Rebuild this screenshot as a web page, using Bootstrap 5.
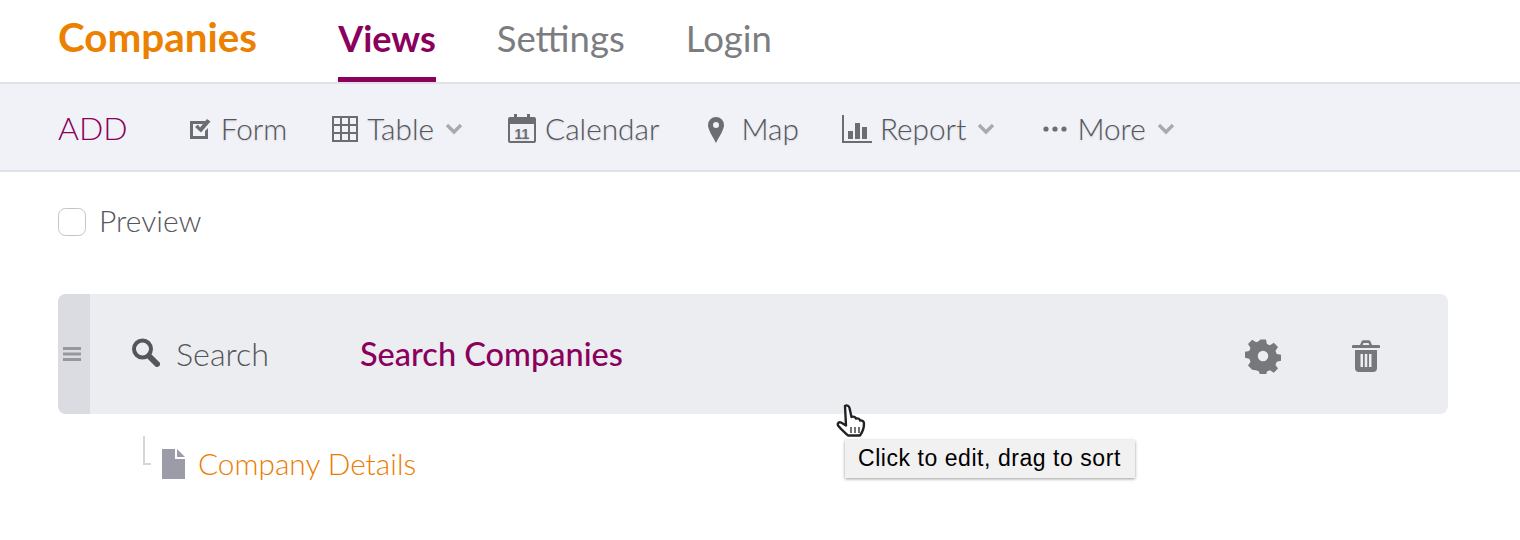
<!DOCTYPE html>
<html lang="en">
<head>
<meta charset="utf-8">
<title>Views</title>
<link href="https://cdn.jsdelivr.net/npm/bootstrap@5.3.0/dist/css/bootstrap.min.css" rel="stylesheet">
<style>
body{font-family:"Lato",sans-serif;font-weight:300;color:#55565c;background:#fff;height:540px;overflow:hidden}
.topnav{height:84px;border-bottom:2px solid #e0e1e6;padding-left:58px;gap:61px}
.brand-link{font-size:40.4px;font-weight:700;color:#ec8000;text-decoration:none;margin-right:20px;line-height:73px}
.top-link{font-size:36.5px;font-weight:400;color:#7c7d80;text-decoration:none;line-height:77px;height:82px;display:block}
.top-link.current{font-size:36px;font-weight:700;color:#8a005c;border-bottom:5px solid #8a005c;line-height:76px}
.subbar{height:88px;background:#f1f2f7;border-bottom:2px solid #e0e1e6;padding:4px 0 0 58px;gap:45px}
.add-link{font-size:32px;color:#8a005c;text-decoration:none;margin-right:15px;margin-top:-3px}
.sub-link{font-size:29.8px;color:#55565c;text-decoration:none;gap:9px;text-shadow:0 1px 2px rgba(0,0,0,.14)}
.sub-ico{fill:#6c6d72;flex:none}
.chev{fill:none;stroke:#a9aaad;stroke-width:3.4;flex:none;margin-left:2px}
.preview-row{padding:30px 0 0 58px;gap:13px;font-size:30px;line-height:36px}
.fake-check{width:28px;height:28px;border:1px solid #c4c5c8;border-radius:6px;margin:4px 0 0;box-shadow:none}
.view-row{margin:56px 72px 0 58px;height:120px;background:#ecedf1;border-radius:8px;overflow:hidden}
.grip{width:32px;background:#dbdce1}
.view-type{font-size:32.3px;margin-left:41px;gap:16px;width:229px}
.view-name{font-size:32.5px;font-weight:500;color:#8a005c}
.action-ico{fill:#77787c}
.tree-row{padding-left:143px;margin-top:22px;height:56px;font-size:29.8px;color:#ec7c00}
.tree-line{width:8px;height:29px;border-left:2px solid #d5d6db;border-bottom:2px solid #d5d6db;margin-right:11px}
.hint-box{position:absolute;left:845px;top:440px;width:290px;height:38px;background:#f1f1f1;box-shadow:0 1px 3px rgba(0,0,0,.4);font:400 23px/36px "Liberation Sans",sans-serif;letter-spacing:.55px;color:#000;padding-left:13px;white-space:nowrap}
.hand{position:absolute;left:834px;top:403px}
</style>
</head>
<body>
<nav class="topnav d-flex align-items-start">
  <a class="brand-link" href="#">Companies</a>
  <a class="top-link current" href="#">Views</a>
  <a class="top-link" href="#">Settings</a>
  <a class="top-link" href="#">Login</a>
</nav>
<div class="subbar d-flex align-items-center">
  <a class="add-link" href="#">ADD</a>
  <a class="sub-link d-flex align-items-center" href="#">
    <svg class="sub-ico" width="24" height="24" viewBox="0 0 24 24"><path fill-rule="evenodd" d="M2 4h16l-3 3H5v12h12v-5l3-3v11H2z"/><path d="M7 10l3-2.500 2 3L19 2l3.500 2.500-9.500 11z"/></svg>Form</a>
  <a class="sub-link d-flex align-items-center" href="#">
    <svg class="sub-ico" width="26" height="26" viewBox="0 0 26 26"><path fill-rule="evenodd" d="M0 0h26v26H0zM2 2v6h6V2zm8 0v6h6V2zm8 0v6h6V2zM2 10v6h6v-6zm8 0v6h6v-6zm8 0v6h6v-6zM2 18v6h6v-6zm8 0v6h6v-6zm8 0v6h6v-6z"/></svg>Table
    <svg class="chev" width="18" height="12" viewBox="0 0 18 12"><path d="M2 2l7 7 7-7"/></svg></a>
  <a class="sub-link d-flex align-items-center" href="#">
    <svg class="sub-ico" width="28" height="30" viewBox="0 0 28 30" style="margin-top:-3px"><path fill-rule="evenodd" d="M2 4h4V1h3v3h10V1h3v3h4a2 2 0 012 2v22a2 2 0 01-2 2H2a2 2 0 01-2-2V6a2 2 0 012-2zm0 7v17h24V11z"/><text x="14" y="26" font-size="14" font-weight="700" text-anchor="middle" font-family="Liberation Sans">11</text></svg>Calendar</a>
  <a class="sub-link d-flex align-items-center" href="#">
    <svg class="sub-ico" width="16" height="26" viewBox="0 0 16 26" style="margin:2px 8px 0 4px"><path fill-rule="evenodd" d="M8 0a8 8 0 018 8c0 5-5 12-8 18C5 20 0 13 0 8a8 8 0 018-8zm0 5a3 3 0 100 6 3 3 0 000-6z"/></svg>Map</a>
  <a class="sub-link d-flex align-items-center" href="#">
    <svg class="sub-ico" width="30" height="28" viewBox="0 0 30 28" style="margin:0 -1px 0 -2px"><path d="M0 0h2v26h28v2H0z"/><path d="M6 16h5v8H6zM13 8h5v16h-5zM20 12h5v12h-5z"/></svg>Report
    <svg class="chev" width="18" height="12" viewBox="0 0 18 12"><path d="M2 2l7 7 7-7"/></svg></a>
  <a class="sub-link d-flex align-items-center" href="#">
    <svg class="sub-ico" width="24" height="6" viewBox="0 0 24 6" style="margin:0 1px 0 3px"><circle cx="3" cy="3" r="2.600"/><circle cx="12" cy="3" r="2.600"/><circle cx="21" cy="3" r="2.600"/></svg>More
    <svg class="chev" width="18" height="12" viewBox="0 0 18 12"><path d="M2 2l7 7 7-7"/></svg></a>
</div>
<div class="preview-row d-flex align-items-center">
  <input class="form-check-input fake-check" type="checkbox" id="pv"><label for="pv">Preview</label>
</div>
<div class="view-row d-flex align-items-stretch">
  <div class="grip d-flex align-items-center justify-content-center">
    <svg width="18" height="14" viewBox="0 0 18 14" fill="#97989d" style="margin-left:-4px"><path d="M0 0h18v3H0zM0 5.500h18v3H0zM0 11h18v3H0z"/></svg>
  </div>
  <div class="view-type d-flex align-items-center">
    <svg width="29" height="29" viewBox="0 0 29 29" fill="none" stroke="#55565c" style="margin-top:-3px"><circle cx="11.500" cy="11" r="8.500" stroke-width="4"/><path d="M18 18l8 8" stroke-width="6" stroke-linecap="round"/></svg>Search
  </div>
  <div class="view-name d-flex align-items-center flex-grow-1">Search Companies</div>
  <div class="d-flex align-items-center">
    <svg class="action-ico" width="36" height="36" viewBox="0 0 24 24" style="margin:4px 71px 0 0"><path fill-rule="evenodd" d="M10 1h4l.6 3 2 .9 2.600-1.700 2.800 2.800-1.700 2.600.9 2 3 .6v4l-3 .6-.9 2 1.700 2.600-2.800 2.800-2.600-1.700-2 .9-.6 3h-4l-.6-3-2-.9L4.800 21.200 2 18.400l1.700-2.600-.9-2-3-.6V9.200l3-.6.9-2L2 4 4.800 1.200l2.600 1.700 2-.9zM12 8.500a3.500 3.500 0 100 7 3.500 3.500 0 000-7z"/></svg>
    <svg class="action-ico" width="28" height="32" viewBox="0 0 28 32" style="margin:4px 68px 0 0"><path fill-rule="evenodd" d="M9.500 1.500a2 2 0 011.800-1.200h5.400a2 2 0 011.800 1.200L20 5h7a1 1 0 011 1v2H0V6a1 1 0 011-1h7zM11.500 3l-.8 2h6.600l-.8-2zM3 10h22v18a4 4 0 01-4 4H7a4 4 0 01-4-4zm5.500 4v13h2.500V14zm4.250 0v13h2.500V14zm4.250 0v13h2.500V14z"/></svg>
  </div>
</div>
<div class="tree-row d-flex align-items-center">
  <span class="tree-line align-self-start"></span>
  <svg width="23" height="30" viewBox="0 0 23 30" style="margin:0 13px 0 0"><path fill="#9b9ca8" d="M0 0h13v10h10v20H0z"/><path fill="#9b9ca8" d="M15 0l8 8h-8z"/></svg>
  Company Details
</div>
<svg class="hand" width="36" height="36" viewBox="0 0 36 36"><path fill="#fff" stroke="#222" stroke-width="2.400" stroke-linejoin="round" d="M11 3c2-1.500 4 0 4.500 2l2 9c2-1 4 0 4.500 1.500 2-.5 4 .5 4 2 2-.5 4 1 4 3 0 4-1 8-4 12H14c-3-3-7-6-10-10-1-2 1-4 3-3l5 3z"/><path stroke="#444" stroke-width="1.500" d="M17 24v6M21 24v6M25 24v6"/></svg>
<div class="hint-box">Click to edit, drag to sort</div>
</body>
</html>
